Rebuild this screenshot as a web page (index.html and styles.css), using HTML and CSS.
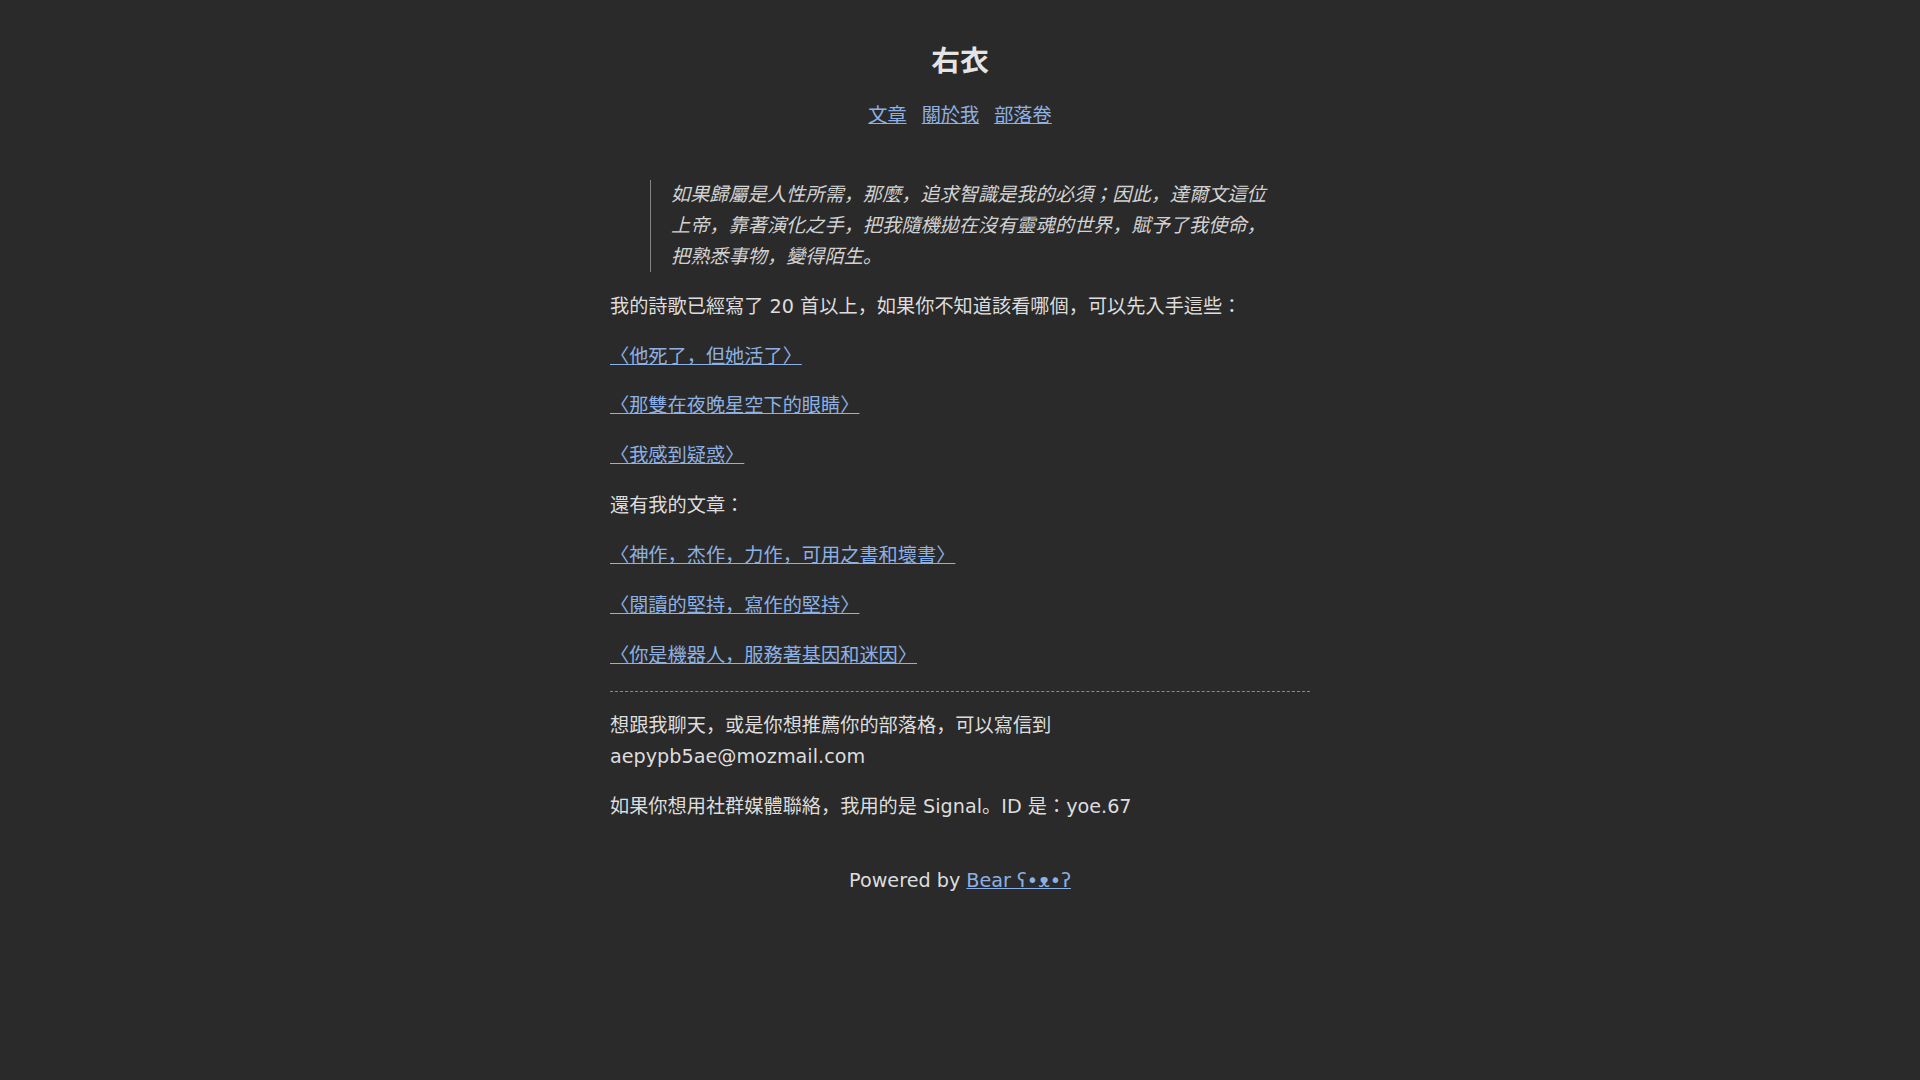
FILE: index.html
```html
<!DOCTYPE html>
<html>
<head>
<meta charset="utf-8">
<title>右衣</title>
<link rel="stylesheet" href="styles.css">
</head>
<body>
<div class="page">
  <header class="site-header">
    <a class="title" href="#"><h1>右衣</h1></a>
    <nav class="site-nav">
      <a href="#">文章</a>
      <a href="#">關於我</a>
      <a href="#">部落卷</a>
    </nav>
  </header>
  <main class="content">
    <blockquote class="quote">
      <p>如果歸屬是人性所需，那麼，追求智識是我的必須；因此，達爾文這位上帝，靠著演化之手，把我隨機拋在沒有靈魂的世界，賦予了我使命，把熟悉事物，變得陌生。</p>
    </blockquote>
    <p>我的詩歌已經寫了 20 首以上，如果你不知道該看哪個，可以先入手這些：</p>
    <p><a href="#">〈他死了，但她活了〉</a></p>
    <p><a href="#">〈那雙在夜晚星空下的眼睛〉</a></p>
    <p><a href="#">〈我感到疑惑〉</a></p>
    <p>還有我的文章：</p>
    <p><a href="#">〈神作，杰作，力作，可用之書和壞書〉</a></p>
    <p><a href="#">〈閱讀的堅持，寫作的堅持〉</a></p>
    <p><a href="#">〈你是機器人，服務著基因和迷因〉</a></p>
    <hr class="divider">
    <p>想跟我聊天，或是你想推薦你的部落格，可以寫信到 aepypb5ae@mozmail.com</p>
    <p>如果你想用社群媒體聯絡，我用的是 Signal。ID 是：yoe.67</p>
  </main>
  <footer class="site-footer">
    <span>Powered by <a href="#">Bear ʕ•ᴥ•ʔ</a></span>
  </footer>
</div>
</body>
</html>
```

FILE: styles.css
```css
html {
  background-color: #2a2a2a;
}

body {
  margin: 0;
  padding: 0;
  background-color: #2a2a2a;
  color: #dddddd;
  font-family: "DejaVu Sans", Verdana, "Noto Sans CJK JP", sans-serif;
  font-size: 19.2px;
  line-height: 1.6;
  word-wrap: break-word;
  overflow-wrap: break-word;
}

.page {
  width: 700px;
  margin: 0 auto;
}

a {
  color: #8db1e4;
}

.site-header {
  padding-top: 44px;
  text-align: center;
}

.title {
  text-decoration: none;
  color: #e4e4e4;
}

.title h1 {
  margin: 0;
  font-size: 28.8px;
  line-height: 1.2;
  font-weight: 700;
  color: #e4e4e4;
}

.site-nav {
  margin-top: 22px;
  display: flex;
  justify-content: center;
  gap: 15px;
  line-height: 1.6;
}

.content p {
  margin: 19.2px 0;
}

.quote {
  margin: 49px 40px 0;
  padding-left: 20px;
  border-left: 1px solid #858585;
  color: #d2d2d2;
  font-style: italic;
}

.quote p {
  margin: 0;
}

.divider {
  margin: 19.2px 0;
  height: 0;
  border: 0;
  border-top: 1px dashed #8a8a8a;
}

.site-footer {
  padding: 24px 25px 25px;
  text-align: center;
}
```
